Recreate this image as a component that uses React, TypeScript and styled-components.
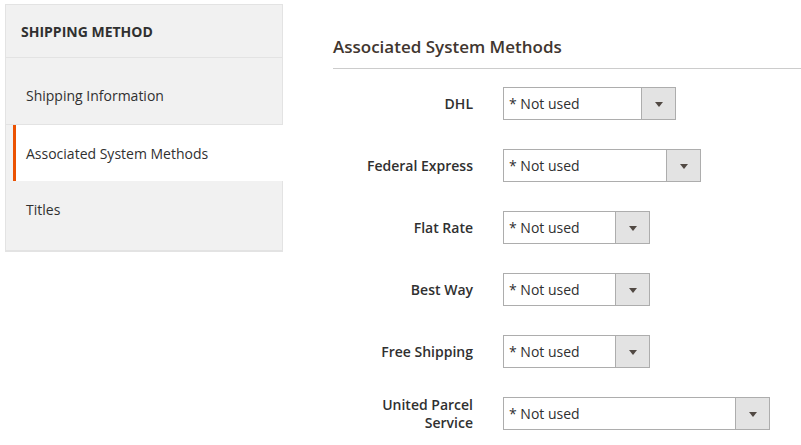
import React from "react";
import styled, { createGlobalStyle } from "styled-components";

const Global = createGlobalStyle`
  html, body { margin: 0; padding: 0; background: #fff; }
  body { font-family: "Open Sans", "Noto Sans", sans-serif; color: #303030; }
  * { box-sizing: border-box; }
`;

const Page = styled.div`
  display: flex;
  align-items: flex-start;
  padding: 4px 0 0 5px;
  width: 801px;
  height: 445px;
  overflow: hidden;
`;

const Sidebar = styled.nav`
  width: 278px;
  flex: none;
  background: #f1f1f1;
  border: 1px solid #e3e3e3;
  border-right: none;
  display: flex;
  flex-direction: column;
`;

const SideTitle = styled.div`
  height: 53px;
  display: flex;
  align-items: center;
  padding: 0 15px;
  font-size: 14px;
  font-weight: 700;
  color: #303030;
  border-bottom: 1px solid #e3e3e3;
  border-right: 1px solid #e3e3e3;
`;

const Tab = styled.div<{ $active?: boolean; $pt: number; $pb: number }>`
  padding: ${(p) => p.$pt}px 10px ${(p) => p.$pb}px ${(p) => (p.$active ? 10 : 20)}px;
  margin-left: ${(p) => (p.$active ? 7 : 0)}px;
  font-size: 14px;
  line-height: 20px;
  color: #303030;
  background: ${(p) => (p.$active ? "#fff" : "transparent")};
  border-left: ${(p) => (p.$active ? "3px solid #eb5202" : "none")};
  border-right: ${(p) => (p.$active ? "none" : "1px solid #e3e3e3")};
  border-bottom: ${(p) => (p.$active ? "none" : "1px solid #e3e3e3")};
`;

const Main = styled.section`
  flex: 1;
  margin-left: 50px;
  padding-top: 32px;
`;

const Heading = styled.h2`
  margin: 0;
  font-size: 17px;
  line-height: 22px;
  font-weight: 600;
  color: #41362f;
  padding-bottom: 10px;
  border-bottom: 1px solid #cccccc;
`;

const Fields = styled.div`
  display: flex;
  flex-direction: column;
  gap: 29px;
  padding-top: 18px;
`;

const Row = styled.div`
  display: flex;
  align-items: center;
  gap: 30px;
  height: 33px;
`;

const Label = styled.label`
  width: 140px;
  flex: none;
  text-align: right;
  font-size: 14px;
  line-height: 18px;
  font-weight: 600;
  color: #303030;
`;

const Select = styled.div<{ $w: number }>`
  width: ${(p) => p.$w}px;
  height: 33px;
  display: flex;
  border: 1px solid #adadad;
  background: #fff;
`;

const Value = styled.span`
  flex: 1;
  display: flex;
  align-items: center;
  padding-left: 5px;
  font-size: 14px;
  color: #303030;
`;

const Arrow = styled.span`
  width: 34px;
  flex: none;
  display: flex;
  align-items: center;
  justify-content: center;
  background: #e3e3e3;
  border-left: 1px solid #adadad;
  &::after {
    content: "";
    border-left: 4px solid transparent;
    border-right: 4px solid transparent;
    border-top: 5px solid #514943;
    margin-top: 1px;
  }
`;

const rows: { label: React.ReactNode; w: number }[] = [
  { label: "DHL", w: 173 },
  { label: "Federal Express", w: 198 },
  { label: "Flat Rate", w: 147 },
  { label: "Best Way", w: 147 },
  { label: "Free Shipping", w: 147 },
  { label: <>United Parcel<br />Service</>, w: 267 },
];

export default function App() {
  return (
    <>
      <Global />
      <Page>
        <Sidebar>
          <SideTitle>SHIPPING METHOD</SideTitle>
          <Tab $pt={28} $pb={18}>Shipping Information</Tab>
          <Tab $active $pt={19} $pb={17}>Associated System Methods</Tab>
          <Tab $pt={19} $pb={30}>Titles</Tab>
        </Sidebar>
        <Main>
          <Heading>Associated System Methods</Heading>
          <Fields>
            {rows.map((r, i) => (
              <Row key={i}>
                <Label>{r.label}</Label>
                <Select $w={r.w}>
                  <Value>* Not used</Value>
                  <Arrow />
                </Select>
              </Row>
            ))}
          </Fields>
        </Main>
      </Page>
    </>
  );
}
